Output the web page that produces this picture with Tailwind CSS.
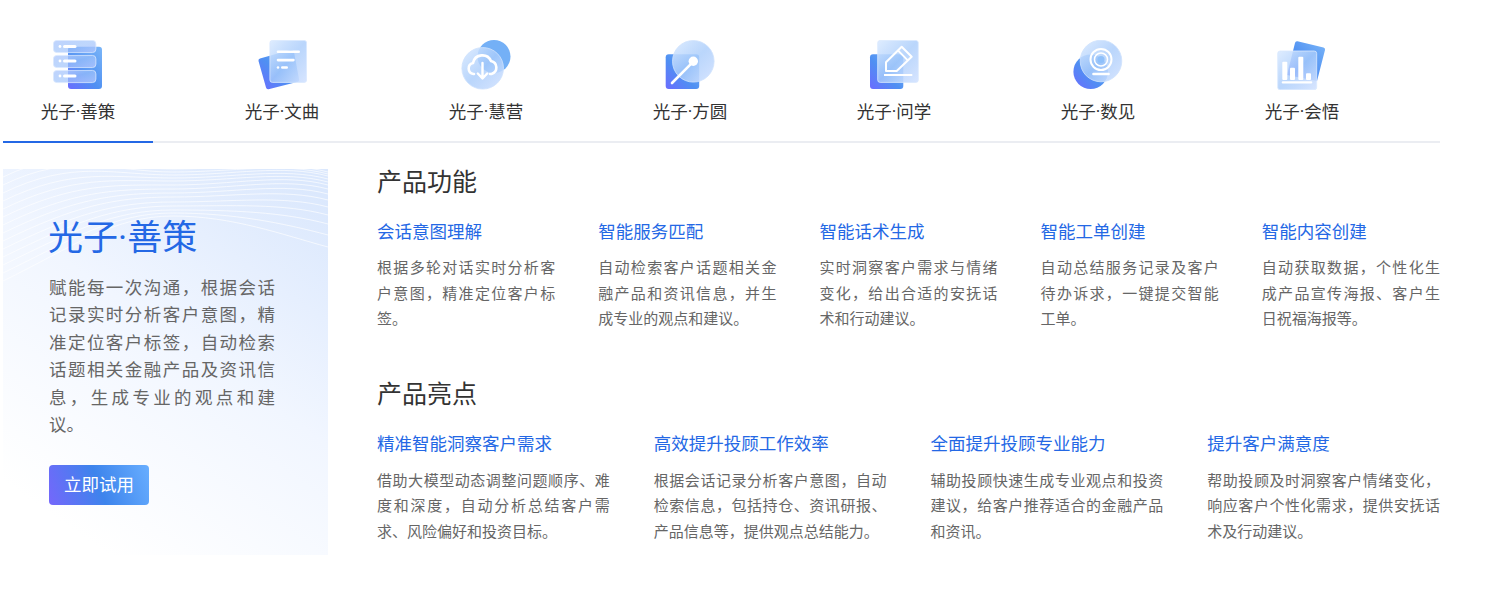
<!DOCTYPE html>
<html lang="zh-CN">
  <head>
    <meta charset="UTF-8" />
    <meta name="viewport" content="width=device-width, initial-scale=1.0" />
    <title>光子</title>
    <script src="https://cdn.jsdelivr.net/npm/@tailwindcss/browser@4"></script>
  </head>
  <body class="bg-white font-['Roboto','Noto_Sans_CJK_SC',sans-serif] text-[#333] overflow-hidden">
    <svg class="absolute w-0 h-0" aria-hidden="true">
      <defs>
        <linearGradient id="solid" x1="0" y1="1" x2="1" y2="0">
          <stop offset="0" stop-color="#6b6cff" />
          <stop offset="0.45" stop-color="#4f90f2" />
          <stop offset="1" stop-color="#7bb6f8" />
        </linearGradient>
        <linearGradient id="glass" x1="0" y1="0" x2="1" y2="1">
          <stop offset="0" stop-color="#b9cffd" stop-opacity="0.9" />
          <stop offset="0.5" stop-color="#a0c4fb" stop-opacity="0.68" />
          <stop offset="1" stop-color="#b4c6ff" stop-opacity="0.82" />
        </linearGradient>
        <linearGradient id="glassLight" x1="0" y1="0" x2="1" y2="1">
          <stop offset="0" stop-color="#dcebff" stop-opacity="0.92" />
          <stop offset="0.5" stop-color="#a9ccfb" stop-opacity="0.8" />
          <stop offset="1" stop-color="#d6e4ff" stop-opacity="0.95" />
        </linearGradient>
      </defs>
    </svg>

    <div class="w-[1437px] ml-[3px]">
      <!-- tabs -->
      <div class="flex gap-[54px] h-[143px] border-b-2 border-[#ebedf2]">
        <div class="w-[150px] h-[143px] pt-10 flex flex-col items-center border-b-2 border-[#2468e5]">
          <svg class="w-[50px] h-[50px]" viewBox="0 0 50 50" fill="none">
            <rect x="15" y="6.7" width="34" height="42.3" rx="3" fill="url(#solid)" />
            <g fill="url(#glass)" stroke="#dbe9fe" stroke-width="0.8">
              <rect x="0.4" y="0.4" width="42.5" height="12.2" rx="3.5" />
              <rect x="0.4" y="15.4" width="42.5" height="12.2" rx="3.5" />
              <rect x="0.4" y="30.4" width="42.5" height="12.2" rx="3.5" />
            </g>
            <g fill="#fff">
              <circle cx="7" cy="6.5" r="1.4" />
              <rect x="10" y="5" width="13.5" height="3" rx="1.5" />
              <circle cx="7" cy="21" r="1.4" />
              <rect x="10" y="19.5" width="13.5" height="3" rx="1.5" />
              <circle cx="7" cy="36" r="1.4" />
              <rect x="10" y="34.5" width="13.5" height="3" rx="1.5" />
            </g>
          </svg>
          <span class="mt-[9px] text-[17.5px] leading-[27px]">光子·善策</span>
        </div>

        <div class="w-[150px] h-[143px] pt-10 flex flex-col items-center">
          <svg class="w-[50px] h-[50px]" viewBox="0 0 50 50" fill="none">
            <path d="M3 18.5 L33 10 Q36 9.5 37 12 L42 39 Q42.5 41.5 40 42 L11.5 49.2 Q9.5 49.5 9 47.5 L1.5 21 Q1 19 3 18.5 Z" fill="url(#solid)" />
            <rect x="12.9" y="0.4" width="36.7" height="42" rx="2.5" fill="url(#glassLight)" stroke="#d9e9fe" stroke-width="0.8" />
            <g fill="#fff">
              <rect x="19.7" y="10.5" width="23.3" height="2.6" rx="1.3" />
              <rect x="19.7" y="18.8" width="18" height="2.6" rx="1.3" />
              <circle cx="21" cy="27.5" r="1.3" />
              <rect x="24" y="26.2" width="7" height="2.6" rx="1.3" />
            </g>
          </svg>
          <span class="mt-[9px] text-[17.5px] leading-[27px]">光子·文曲</span>
        </div>

        <div class="w-[150px] h-[143px] pt-10 flex flex-col items-center">
          <svg class="w-[50px] h-[50px]" viewBox="0 0 50 50" fill="none">
            <circle cx="33" cy="16.5" r="16.5" fill="#74b0f6" />
            <circle cx="21.7" cy="28.3" r="20.8" fill="url(#glassLight)" stroke="#cfe2fd" stroke-width="0.8" />
            <path d="M13 34 H12.5 A5.6 5.6 0 0 1 12 23 A9.5 9.5 0 0 1 30 21 A6.7 6.7 0 0 1 30.5 34 H29" stroke="#fff" stroke-width="2.6" stroke-linecap="round" />
            <path d="M21.5 23 V38 M16.8 33.5 L21.5 38.5 L26.2 33.5" stroke="#fff" stroke-width="2.4" stroke-linecap="round" stroke-linejoin="round" />
          </svg>
          <span class="mt-[9px] text-[17.5px] leading-[27px]">光子·慧营</span>
        </div>

        <div class="w-[150px] h-[143px] pt-10 flex flex-col items-center">
          <svg class="w-[50px] h-[50px]" viewBox="0 0 50 50" fill="none">
            <rect x="0.7" y="14.3" width="33.5" height="34.7" rx="3" fill="url(#solid)" />
            <circle cx="28.3" cy="21.3" r="20.8" fill="url(#glassLight)" stroke="#cfe2fd" stroke-width="0.8" />
            <path d="M7 43 L28 21.8" stroke="#fff" stroke-width="2.6" stroke-linecap="round" />
            <circle cx="28.3" cy="21.3" r="4.7" fill="#fff" />
          </svg>
          <span class="mt-[9px] text-[17.5px] leading-[27px]">光子·方圆</span>
        </div>

        <div class="w-[150px] h-[143px] pt-10 flex flex-col items-center">
          <svg class="w-[50px] h-[50px]" viewBox="0 0 50 50" fill="none">
            <rect x="1" y="14.3" width="33.3" height="34.7" rx="3" fill="url(#solid)" />
            <rect x="8.7" y="0.4" width="40.6" height="42" rx="2.5" fill="url(#glassLight)" stroke="#d9e9fe" stroke-width="0.8" />
            <path d="M17 22.3 L32.7 6.7 L42.7 16.7 L27.7 31 H17 Z" stroke="#fff" stroke-width="2" stroke-linejoin="round" />
            <path d="M29 10.5 L38.8 20.3" stroke="#fff" stroke-width="1.8" />
            <path d="M15 35 H43.3" stroke="#fff" stroke-width="2" />
          </svg>
          <span class="mt-[9px] text-[17.5px] leading-[27px]">光子·问学</span>
        </div>

        <div class="w-[150px] h-[143px] pt-10 flex flex-col items-center">
          <svg class="w-[50px] h-[50px]" viewBox="0 0 50 50" fill="none">
            <circle cx="17.7" cy="31.7" r="17.3" fill="url(#solid)" />
            <circle cx="28" cy="21" r="20.8" fill="url(#glassLight)" stroke="#cfe2fd" stroke-width="0.8" />
            <circle cx="28" cy="19.5" r="10.5" stroke="#fff" stroke-width="2" />
            <circle cx="28" cy="19.5" r="6.5" stroke="#fff" stroke-width="1.5" />
            <circle cx="28" cy="19.5" r="3.5" fill="#8fc0fa" />
            <path d="M20.5 34 H35.5" stroke="#fff" stroke-width="2.6" stroke-linecap="round" />
          </svg>
          <span class="mt-[9px] text-[17.5px] leading-[27px]">光子·数见</span>
        </div>

        <div class="w-[150px] h-[143px] pt-10 flex flex-col items-center">
          <svg class="w-[50px] h-[50px]" viewBox="0 0 50 50" fill="none">
            <path d="M20.5 1.2 L46.5 7.5 Q48.5 8 48 10 L40 41 L10 35 L18 3 Q18.5 0.8 20.5 1.2 Z" fill="url(#solid)" />
            <rect x="0.7" y="11" width="39" height="38.7" rx="2.5" fill="url(#glassLight)" stroke="#d9e9fe" stroke-width="0.8" />
            <g fill="#fff">
              <rect x="5.3" y="21.7" width="5" height="18.3" rx="1" />
              <rect x="13" y="27.7" width="5" height="12.3" rx="1" />
              <rect x="21.3" y="16.7" width="5" height="23.3" rx="1" />
              <rect x="29" y="33.3" width="5" height="6.7" rx="1" />
              <rect x="4.7" y="41.2" width="30.6" height="2.3" rx="1.1" />
            </g>
          </svg>
          <span class="mt-[9px] text-[17.5px] leading-[27px]">光子·会悟</span>
        </div>
      </div>

      <div class="flex mt-[26px]">
        <!-- left panel -->
        <div class="relative w-[325px] h-[386px] shrink-0 overflow-hidden bg-[linear-gradient(35deg,#ffffff_12%,#f1f6ff_55%,#dbe8fd_95%)] pt-[46px] pl-[46px] pr-[53px]">
          <svg class="absolute left-0 top-0 w-[325px] h-[130px]" viewBox="0 0 325 130" fill="none" stroke="#fff" stroke-width="1" stroke-opacity="0.65">
            <path d="M0 8 C70 -26 110 0 170 0 S280 -9 325 3" />
            <path d="M0 16 C70 -18 110 3 170 3 S280 -7 325 5" />
            <path d="M0 24 C70 -10 110 6 170 6 S280 -5 325 7" />
            <path d="M0 32 C70 -2 110 9 170 9 S280 -2 325 10" />
            <path d="M0 40 C70 6 110 12 170 12 S280 1 325 13" />
            <path d="M0 48 C70 14 110 16 170 16 S280 4 325 16" />
            <path d="M0 56 C70 22 110 20 170 20 S280 8 325 20" />
            <path d="M0 64 C70 30 110 24 170 24 S280 13 325 25" />
            <path d="M0 72 C70 38 110 28 170 28 S280 19 325 31" />
            <path d="M0 80 C70 46 110 33 170 33 S280 26 325 38" />
            <path d="M0 88 C70 54 110 37 170 37 S280 34 325 46" />
            <path d="M0 96 C70 62 110 41 170 41 S280 43 325 55" />
            <path d="M0 104 C70 70 110 44 170 44 S280 54 325 66" />
            <path d="M0 112 C70 78 110 47 170 47 S280 66 325 78" />
          </svg>
          <h2 class="relative -ml-px text-[35px] leading-[48px] text-[#2468e5] font-normal">光子·善策</h2>
          <p class="relative mt-[12px] text-[17.5px] leading-[27.4px] text-[#666] text-justify">赋能每一次沟通，根据会话记录实时分析客户意图，精准定位客户标签，自动检索话题相关金融产品及资讯信息，生成专业的观点和建议。</p>
          <button class="relative mt-[26px] block w-[100px] h-[40px] rounded-[4px] text-[17.5px] text-white bg-[linear-gradient(70deg,#7567fb_0%,#3d84ec_50%,#68aeff_100%)]">立即试用</button>
        </div>

        <!-- right content -->
        <div class="ml-[49px] flex-1 min-w-0">
          <h3 class="text-[25px] leading-[30px] font-normal -mt-[1px]">产品功能</h3>
          <div class="grid grid-cols-5 gap-x-[43px] mt-[21px]">
            <div>
              <h4 class="text-[17.5px] leading-[27px] font-normal text-[#2468e5]">会话意图理解</h4>
              <p class="mt-[10px] text-[15px] leading-[25.5px] text-[#666] text-justify">根据多轮对话实时分析客户意图，精准定位客户标签。</p>
            </div>
            <div>
              <h4 class="text-[17.5px] leading-[27px] font-normal text-[#2468e5]">智能服务匹配</h4>
              <p class="mt-[10px] text-[15px] leading-[25.5px] text-[#666] text-justify">自动检索客户话题相关金融产品和资讯信息，并生成专业的观点和建议。</p>
            </div>
            <div>
              <h4 class="text-[17.5px] leading-[27px] font-normal text-[#2468e5]">智能话术生成</h4>
              <p class="mt-[10px] text-[15px] leading-[25.5px] text-[#666] text-justify">实时洞察客户需求与情绪变化，给出合适的安抚话术和行动建议。</p>
            </div>
            <div>
              <h4 class="text-[17.5px] leading-[27px] font-normal text-[#2468e5]">智能工单创建</h4>
              <p class="mt-[10px] text-[15px] leading-[25.5px] text-[#666] text-justify">自动总结服务记录及客户待办诉求，一键提交智能工单。</p>
            </div>
            <div>
              <h4 class="text-[17.5px] leading-[27px] font-normal text-[#2468e5]">智能内容创建</h4>
              <p class="mt-[10px] text-[15px] leading-[25.5px] text-[#666] text-justify">自动获取数据，个性化生成产品宣传海报、客户生日祝福海报等。</p>
            </div>
          </div>

          <h3 class="text-[25px] leading-[30px] font-normal mt-[47px]">产品亮点</h3>
          <div class="grid grid-cols-4 gap-x-[44px] mt-[21px]">
            <div>
              <h4 class="text-[17.5px] leading-[27px] font-normal text-[#2468e5]">精准智能洞察客户需求</h4>
              <p class="mt-[11px] text-[15px] leading-[25.5px] text-[#666] text-justify">借助大模型动态调整问题顺序、难度和深度，自动分析总结客户需求、风险偏好和投资目标。</p>
            </div>
            <div>
              <h4 class="text-[17.5px] leading-[27px] font-normal text-[#2468e5]">高效提升投顾工作效率</h4>
              <p class="mt-[11px] text-[15px] leading-[25.5px] text-[#666] text-justify">根据会话记录分析客户意图，自动检索信息，包括持仓、资讯研报、产品信息等，提供观点总结能力。</p>
            </div>
            <div>
              <h4 class="text-[17.5px] leading-[27px] font-normal text-[#2468e5]">全面提升投顾专业能力</h4>
              <p class="mt-[11px] text-[15px] leading-[25.5px] text-[#666] text-justify">辅助投顾快速生成专业观点和投资建议，给客户推荐适合的金融产品和资讯。</p>
            </div>
            <div>
              <h4 class="text-[17.5px] leading-[27px] font-normal text-[#2468e5]">提升客户满意度</h4>
              <p class="mt-[11px] text-[15px] leading-[25.5px] text-[#666] text-justify">帮助投顾及时洞察客户情绪变化，响应客户个性化需求，提供安抚话术及行动建议。</p>
            </div>
          </div>
        </div>
      </div>
    </div>
  </body>
</html>
